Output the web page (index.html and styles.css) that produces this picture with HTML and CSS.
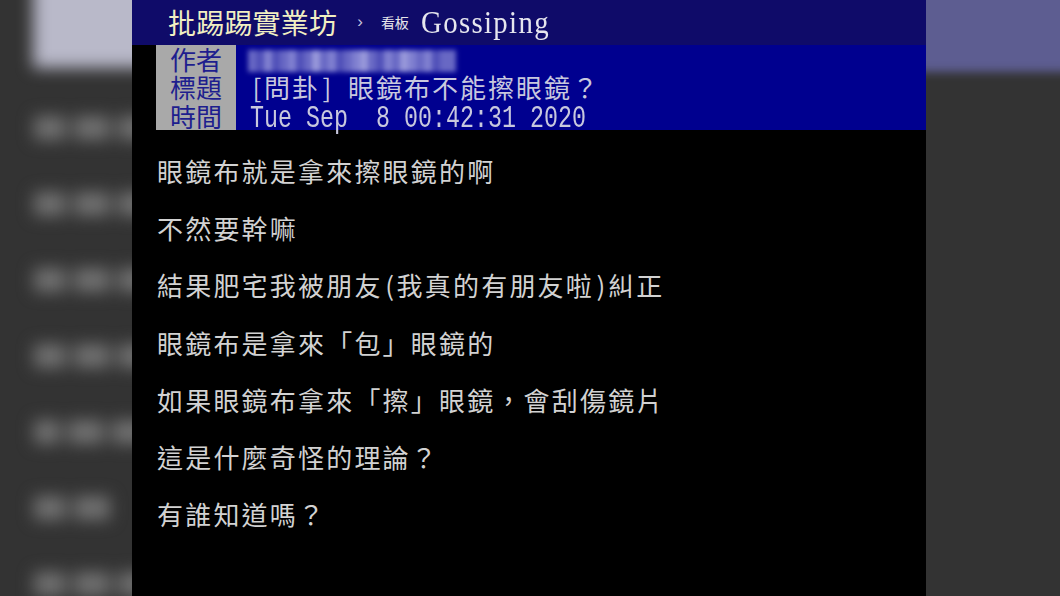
FILE: index.html
```html
<!DOCTYPE html>
<html lang="zh-Hant">
<head>
<meta charset="utf-8">
<title>批踢踢實業坊 Gossiping</title>
<link rel="stylesheet" href="styles.css">
</head>
<body>
<div class="page">
  <div class="side side-left">
    <div class="blur-left">
      <div class="glow-block"></div>
      <div class="ghost-rows">
        <div class="ghost-row"><span class="g1"></span><span class="g2"></span><span class="g3"></span></div>
        <div class="ghost-row"><span class="g1"></span><span class="g2"></span><span class="g3"></span></div>
        <div class="ghost-row"><span class="g1"></span><span class="g2"></span><span class="g3"></span></div>
        <div class="ghost-row"><span class="g1"></span><span class="g2"></span><span class="g3"></span></div>
        <div class="ghost-row"><span class="g1b"></span><span class="g2"></span><span class="g3"></span></div>
        <div class="ghost-row"><span class="g1"></span><span class="g2"></span></div>
        <div class="ghost-row"><span class="g1"></span><span class="g2"></span><span class="g3"></span></div>
      </div>
    </div>
  </div>

  <div class="panel">
    <div class="topbar">
      <span class="site">批踢踢實業坊</span>
      <span class="crumb">›</span>
      <span class="board-label">看板</span>
      <span class="board">Gossiping</span>
    </div>

    <div class="meta">
      <div class="labels">
        <div>作者</div>
        <div>標題</div>
        <div>時間</div>
      </div>
      <div class="values">
        <div class="row author">
          <div class="mosaic">
            <span class="m2"></span><span class="m1"></span><span class="m3"></span><span class="m1"></span><span class="m2"></span><span class="m3"></span><span class="m1"></span><span class="m2"></span><span class="m4"></span><span class="m2"></span><span class="m3"></span><span class="m1"></span><span class="m2"></span><span class="m3"></span><span class="m4"></span><span class="m2"></span><span class="m1"></span><span class="m3"></span><span class="m2"></span><span class="m4"></span><span class="m3"></span><span class="m2"></span><span class="m3"></span><span class="m1"></span><span class="m2"></span><span class="m2"></span>
          </div>
        </div>
        <div class="row title"><span class="half">[</span>問卦<span class="half">]</span><span class="half"> </span>眼鏡布不能擦眼鏡？</div>
        <div class="row time">Tue Sep  8 00:42:31 2020</div>
      </div>
    </div>

    <div class="content">
      <p>眼鏡布就是拿來擦眼鏡的啊</p>
      <p>不然要幹嘛</p>
      <p>結果肥宅我被朋友<span class="half">(</span>我真的有朋友啦<span class="half">)</span>糾正</p>
      <p>眼鏡布是拿來「包」眼鏡的</p>
      <p>如果眼鏡布拿來「擦」眼鏡，會刮傷鏡片</p>
      <p>這是什麼奇怪的理論？</p>
      <p>有誰知道嗎？</p>
    </div>
  </div>

  <div class="side side-right">
    <div class="blur-right">
      <div class="tint-block"></div>
    </div>
  </div>
</div>
</body>
</html>
```

FILE: styles.css
```css
html, body {
  margin: 0;
  padding: 0;
  background: #333333;
}

body {
  font-family: "Noto Sans CJK TC", "Noto Sans CJK SC", sans-serif;
}

.page {
  display: flex;
  width: 1060px;
  height: 596px;
  overflow: hidden;
}

.side {
  overflow: hidden;
  height: 596px;
}

.side-left {
  width: 132px;
  flex: 0 0 132px;
}

.side-right {
  flex: 1 1 auto;
}

/* blurred backdrop, left */
.blur-left {
  filter: blur(8px);
  display: flex;
  flex-direction: column;
  margin-top: -20px;
}

.glow-block {
  height: 88px;
  margin-left: 33px;
  margin-right: -30px;
  background: #b9b9c9;
}

.ghost-rows {
  display: flex;
  flex-direction: column;
  gap: 52px;
  padding-top: 48px;
}

.ghost-row {
  display: flex;
  gap: 8px;
  height: 24px;
  margin-left: 34px;
  margin-right: -30px;
}

.ghost-row span {
  background: #6f6f6f;
}

.ghost-row .g1 { width: 32px; }
.ghost-row .g1b { width: 26px; }
.ghost-row .g2 { width: 36px; }
.ghost-row .g3 { flex: 1; }

/* blurred backdrop, right */
.blur-right {
  filter: blur(5px);
  margin: -20px -20px 0 -20px;
}

.tint-block {
  height: 92px;
  background: #5d5d91;
}

/* main panel */
.panel {
  width: 794px;
  flex: 0 0 794px;
  height: 596px;
  background: #000000;
  display: flex;
  flex-direction: column;
}

.topbar {
  height: 45px;
  flex: 0 0 45px;
  background: #0f0b69;
  display: flex;
  align-items: flex-start;
  padding-left: 36px;
  line-height: 44px;
}

.site {
  font-size: 28px;
  color: #f1efc2;
  letter-spacing: 0.2px;
}

.crumb {
  font-family: "Liberation Sans", sans-serif;
  font-size: 17px;
  color: #c4c4dc;
  margin-left: 20px;
}

.board-label {
  font-size: 14px;
  color: #e6e6ea;
  margin-left: 18px;
}

.board {
  font-family: "Liberation Serif", serif;
  font-size: 32px;
  letter-spacing: 1.5px;
  color: #e6e6ee;
  margin-left: 12px;
  transform: scaleX(0.9);
  transform-origin: left center;
}

.meta {
  height: 85px;
  flex: 0 0 85px;
  display: flex;
  padding-left: 24px;
  background: #000000;
}

.labels {
  width: 80px;
  background: #a9a9a9;
  color: #1e1e8e;
  font-size: 26px;
  line-height: 28.3px;
  text-align: center;
}

.values {
  flex: 1;
  background: #00008f;
  padding-left: 14px;
  display: flex;
  flex-direction: column;
  color: #c8c8de;
}

.row {
  height: 28px;
  flex: 0 0 28px;
}

.author {
  display: flex;
  align-items: center;
}

.mosaic {
  display: flex;
  height: 22px;
  margin-top: 3px;
  margin-left: -2px;
  filter: blur(2.6px);
}

.mosaic span {
  width: 8px;
  height: 22px;
  flex: 0 0 8px;
}

.mosaic .m1 { background: #5050b8; }
.mosaic .m2 { background: #6868c4; }
.mosaic .m3 { background: #8080d0; }
.mosaic .m4 { background: #9898da; }

.title {
  font-size: 26px;
  line-height: 28px;
  letter-spacing: 2px;
  white-space: pre;
}

.half {
  display: inline-block;
  width: 14px;
  text-align: center;
  letter-spacing: 0;
}

.time {
  font-family: "Liberation Mono", monospace;
  font-size: 32px;
  line-height: 35px;
  white-space: pre;
  transform: scaleX(0.729);
  transform-origin: left center;
  flex: 0 0 29px;
}

.content {
  padding: 12px 0 0 25px;
  color: #d2d2d2;
  font-size: 26px;
  letter-spacing: 2.2px;
}

.content p {
  margin: 0;
  height: 57.2px;
  line-height: 57.2px;
  white-space: nowrap;
}
```
